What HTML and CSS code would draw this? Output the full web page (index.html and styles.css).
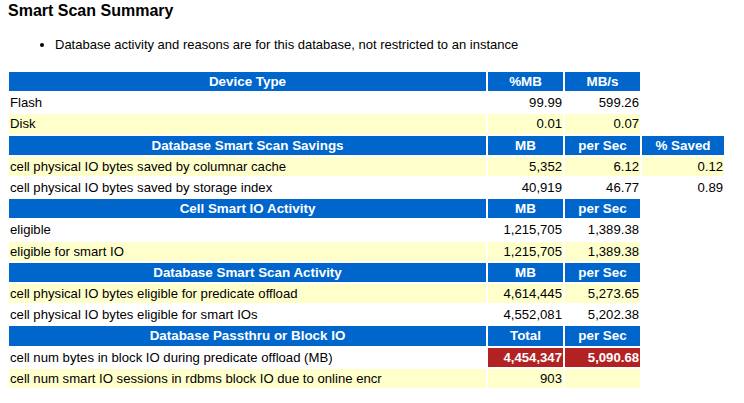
FILE: index.html
```html
<!DOCTYPE html>
<html>
<head>
<meta charset="utf-8">
<link rel="stylesheet" href="styles.css">
</head>
<body>
<h3 class="title">Smart Scan Summary</h3>
<ul class="notes">
<li>Database activity and reasons are for this database, not restricted to an instance</li>
</ul>
<table class="awr">
<colgroup><col class="c1"><col class="c2"><col class="c3"><col class="c4"></colgroup>
<tr><th>Device Type</th><th>%MB</th><th>MB/s</th><td class="none"></td></tr>
<tr><td class="w">Flash</td><td class="w num">99.99</td><td class="w num">599.26</td><td class="none"></td></tr>
<tr><td class="y">Disk</td><td class="y num">0.01</td><td class="y num">0.07</td><td class="none"></td></tr>
<tr><th>Database Smart Scan Savings</th><th>MB</th><th>per Sec</th><th>% Saved</th></tr>
<tr><td class="y">cell physical IO bytes saved by columnar cache</td><td class="y num">5,352</td><td class="y num">6.12</td><td class="y num">0.12</td></tr>
<tr><td class="w">cell physical IO bytes saved by storage index</td><td class="w num">40,919</td><td class="w num">46.77</td><td class="w num">0.89</td></tr>
<tr><th>Cell Smart IO Activity</th><th>MB</th><th>per Sec</th><td class="none"></td></tr>
<tr><td class="w">eligible</td><td class="w num">1,215,705</td><td class="w num">1,389.38</td><td class="none"></td></tr>
<tr><td class="y">eligible for smart IO</td><td class="y num">1,215,705</td><td class="y num">1,389.38</td><td class="none"></td></tr>
<tr><th>Database Smart Scan Activity</th><th>MB</th><th>per Sec</th><td class="none"></td></tr>
<tr><td class="y">cell physical IO bytes eligible for predicate offload</td><td class="y num">4,614,445</td><td class="y num">5,273.65</td><td class="none"></td></tr>
<tr><td class="w">cell physical IO bytes eligible for smart IOs</td><td class="w num">4,552,081</td><td class="w num">5,202.38</td><td class="none"></td></tr>
<tr><th>Database Passthru or Block IO</th><th>Total</th><th>per Sec</th><td class="none"></td></tr>
<tr><td class="w">cell num bytes in block IO during predicate offload (MB)</td><td class="r num">4,454,347</td><td class="r num">5,090.68</td><td class="none"></td></tr>
<tr><td class="y">cell num smart IO sessions in rdbms block IO due to online encr</td><td class="y num">903</td><td class="y num"></td><td class="none"></td></tr>
</table>
</body>
</html>
```
FILE: styles.css
```css
html, body {
  margin: 0;
  padding: 0;
  background: #ffffff;
  font-family: "Liberation Sans", Arial, sans-serif;
  color: #000000;
}
.title {
  margin: 2px 0 0 8px;
  font-size: 16px;
  font-weight: bold;
  line-height: 18px;
}
.notes {
  margin: 17px 0 0 0;
  padding-left: 55px;
  font-size: 13px;
  line-height: 15px;
}
.awr {
  margin: 18px 0 0 7px;
  border-collapse: separate;
  border-spacing: 2px;
  table-layout: fixed;
  width: 719px;
  font-size: 13.15px;
}
.c1 { width: 477px; }
.c2 { width: 75px; }
.c3 { width: 75px; }
.c4 { width: 82px; }
.awr th, .awr td {
  padding: 1px;
  line-height: 17.2px;
  white-space: nowrap;
  overflow: hidden;
}
.awr th {
  background: #0066cc;
  color: #ffffff;
  font-weight: bold;
  font-size: 13.4px;
  text-align: center;
}
.awr td.w { background: #ffffff; text-align: left; }
.awr td.y { background: #ffffcc; text-align: left; }
.awr td.r { background: #b22222; color: #ffffff; font-weight: bold; }
.awr td.num { text-align: right; }
.awr td.none { background: transparent; }
```
